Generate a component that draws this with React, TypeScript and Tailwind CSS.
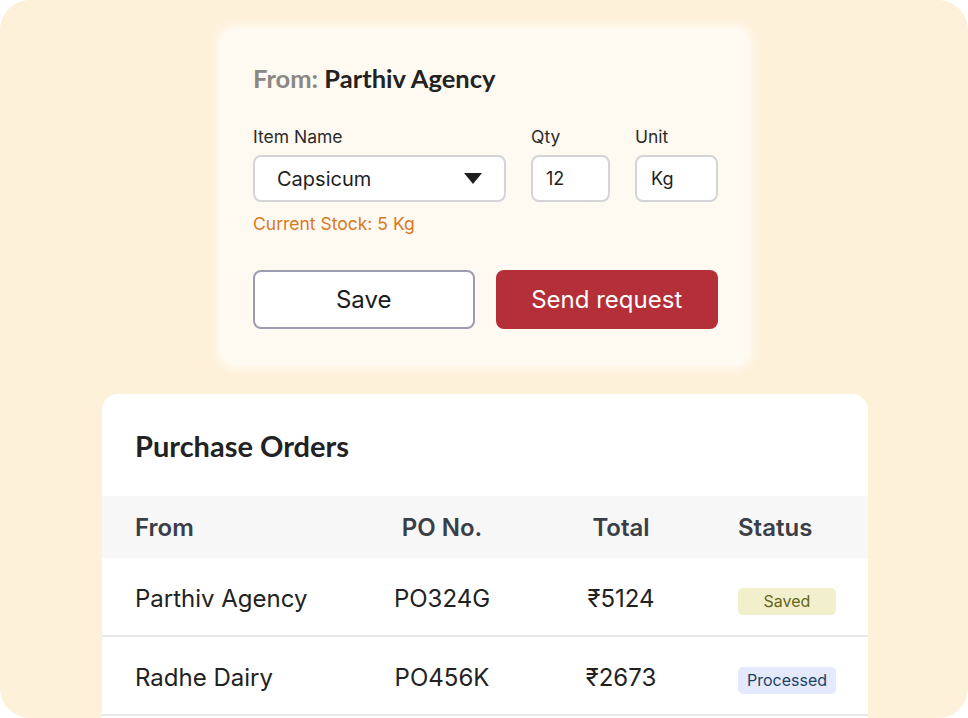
import React from "react";

const rows = [
  { from: "Parthiv Agency", po: "PO324G", total: "₹5124", status: "Saved", badge: "bg-[#f2f0cc] text-[#66651a]" },
  { from: "Radhe Dairy", po: "PO456K", total: "₹2673", status: "Processed", badge: "bg-[#e4e9fb] text-[#1d3f62]" },
];

export default function App() {
  return (
    <div className="w-[968px] h-[718px] bg-white" style={{ fontFamily: "Inter, 'Noto Sans', sans-serif" }}>
      <div className="w-full h-full rounded-[30px] bg-[#fef1da] overflow-hidden flex flex-col items-center pt-[28px]">
        {/* Form card */}
        <div className="w-[530px] h-[338px] rounded-[16px] bg-[#fffaf1] shadow-[0_0_8px_4px_rgba(255,250,241,0.9)] pl-[33px] pr-[32px] pt-[35px] ml-[2px]">
          <div className="text-[25.5px] leading-[30px] font-bold" style={{ fontFamily: "Lato, 'Open Sans', sans-serif" }}>
            <span className="text-[#8a8784]">From: </span>
            <span className="text-[#222222]">Parthiv Agency</span>
          </div>
          <div className="flex gap-[25px] mt-[34px]">
            <div className="flex flex-col w-[253px]">
              <div className="text-[17.5px] leading-[20px] text-[#2b2b2b] mb-[8px]">Item Name</div>
              <div className="h-[47px] rounded-[8px] border-2 border-[#d4d4d6] bg-white flex items-center justify-between pl-[22px] pr-[22px]">
                <span className="text-[20px] text-[#1e1e1e]">Capsicum</span>
                <svg width="18" height="11" viewBox="0 0 18 11"><path d="M0 0 H18 L9 11 Z" fill="#1f1f1f" /></svg>
              </div>
            </div>
            <div className="flex flex-col w-[79px]">
              <div className="text-[17.5px] leading-[20px] text-[#2b2b2b] mb-[8px]">Qty</div>
              <div className="h-[47px] rounded-[8px] border-2 border-[#d4d4d6] bg-white flex items-center pl-[13px]">
                <span className="text-[18px] text-[#1e1e1e]">12</span>
              </div>
            </div>
            <div className="flex flex-col w-[83px]">
              <div className="text-[17.5px] leading-[20px] text-[#2b2b2b] mb-[8px]">Unit</div>
              <div className="h-[47px] rounded-[8px] border-2 border-[#d4d4d6] bg-white flex items-center pl-[14px]">
                <span className="text-[18px] text-[#1e1e1e]">Kg</span>
              </div>
            </div>
          </div>
          <div className="mt-[12px] text-[17.5px] leading-[20px] text-[#d9781f]">Current Stock: 5 Kg</div>
          <div className="flex gap-[21px] mt-[36px]">
            <button className="w-[222px] h-[59px] rounded-[8px] border-2 border-[#9c9bb0] bg-white text-[24px] font-normal text-[#1c1c1c]">Save</button>
            <button className="w-[223px] h-[59px] rounded-[8px] bg-[#b42f37] text-[24px] font-normal text-white">Send request</button>
          </div>
        </div>

        {/* Table card */}
        <div className="w-[766px] mt-[28px] rounded-t-[16px] bg-white flex-1 ml-[2px]">
          <div className="pl-[33px] pt-[36px] pb-[34px] text-[29px] leading-[32px] font-bold text-[#222222]" style={{ fontFamily: "Lato, 'Open Sans', sans-serif" }}>
            Purchase Orders
          </div>
          <div className="grid grid-cols-[220px_174px_184px_1fr] items-center h-[62px] bg-[#f7f7f8] pl-[33px] pt-[1px] text-[24px] font-semibold text-[#3a3e46]">
            <div>From</div>
            <div className="text-center">PO No.</div>
            <div className="text-center">Total</div>
            <div className="pl-[25px]">Status</div>
          </div>
          {rows.map((r) => (
            <div key={r.po} className="grid grid-cols-[220px_174px_184px_1fr] items-center h-[79px] border-b-2 border-[#e8e8ea] pl-[33px] pt-[5px] text-[24px] text-[#222222]">
              <div>{r.from}</div>
              <div className="text-center">{r.po}</div>
              <div className="text-center">{r.total}</div>
              <div className="pl-[25px]">
                <span className={`inline-flex items-center justify-center w-[98px] h-[27px] rounded-[5px] text-[16px] ${r.badge}`}>{r.status}</span>
              </div>
            </div>
          ))}
        </div>
      </div>
    </div>
  );
}
